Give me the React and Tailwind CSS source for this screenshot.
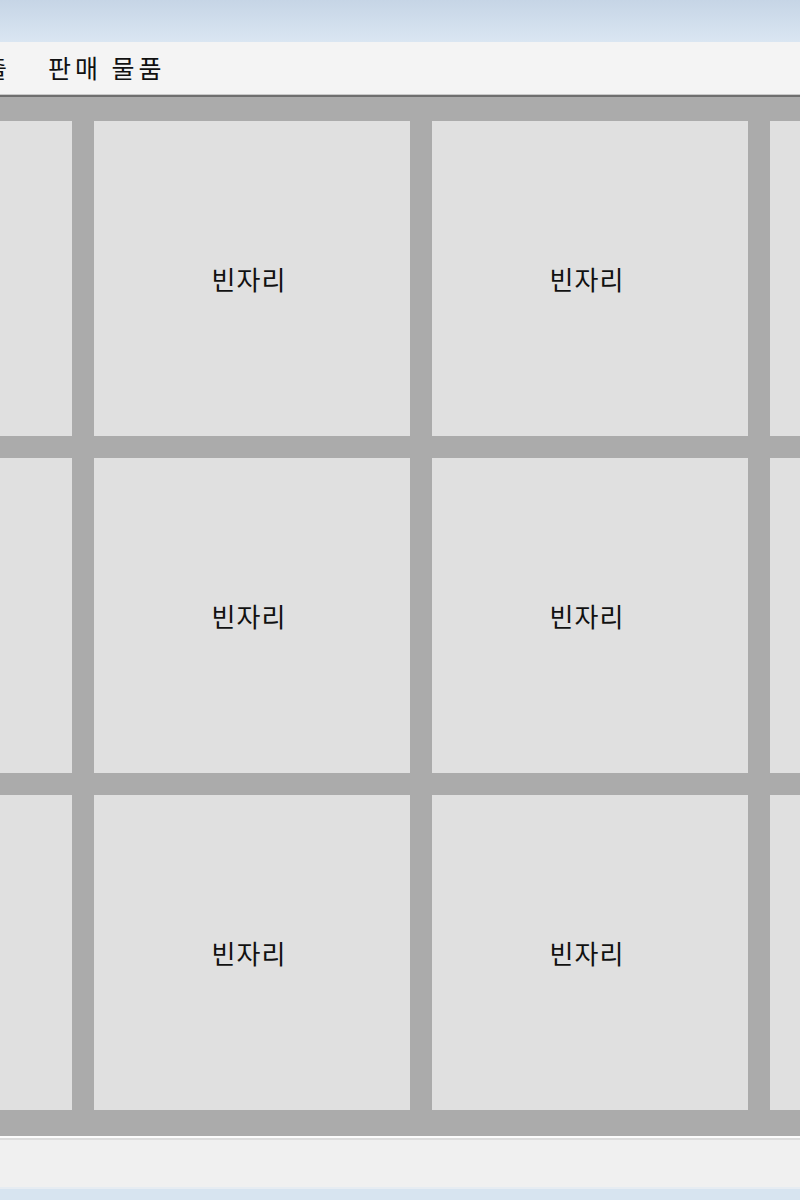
const FONT = { fontFamily: '"Noto Sans CJK KR", "Noto Sans", sans-serif' };

const rows = [0, 1, 2];
const cols = [0, 1, 2, 3];

function Slot() {
    return (
        <div className="w-[316px] h-[315px] shrink-0 bg-[#e0e0e0] flex items-center justify-center">
            <span className="text-[26px] tracking-[1px] leading-none text-[#111] mr-[6px]">빈자리</span>
        </div>
    );
}

export default function App() {
    return (
        <div className="w-[800px] h-[1200px] overflow-hidden flex flex-col bg-[#f0f0f0]" style={FONT}>
            {/* title bar */}
            <div className="h-[42px] shrink-0 bg-gradient-to-b from-[#c6d5e6] to-[#dae6f2]" />

            {/* menu */}
            <div className="h-[52px] shrink-0 bg-[#f4f4f4] flex items-center gap-[41px] overflow-hidden">
                <span className="text-[25px] text-[#111] ml-[-16px]">출</span>
                <span className="text-[25px] tracking-[4px] text-[#111]">판매 물품</span>
            </div>
            <div className="h-[1px] bg-[#c8c8c8]" />
            <div className="h-[2px] bg-[#6e6e6e]" />

            {/* slots */}
            <div className="h-[1039px] shrink-0 bg-[#ababab] overflow-hidden flex flex-col gap-[22px] pt-[24px]">
                {rows.map((r) => (
                    <div key={r} className="flex gap-[22px] ml-[-244px]">
                        {cols.map((c) => (
                            <Slot key={c} />
                        ))}
                    </div>
                ))}
            </div>

            {/* status bar */}
            <div className="h-[2px] bg-[#fbfbfb]" />
            <div className="h-[2px] bg-[#dcdcdc]" />
            <div className="h-[47px] shrink-0 bg-[#f0f0f0]" />
            <div className="h-[2px] bg-[#e6ecf2]" />
            <div className="flex-1 bg-[#d7e4f0]" />
        </div>
    );
}
